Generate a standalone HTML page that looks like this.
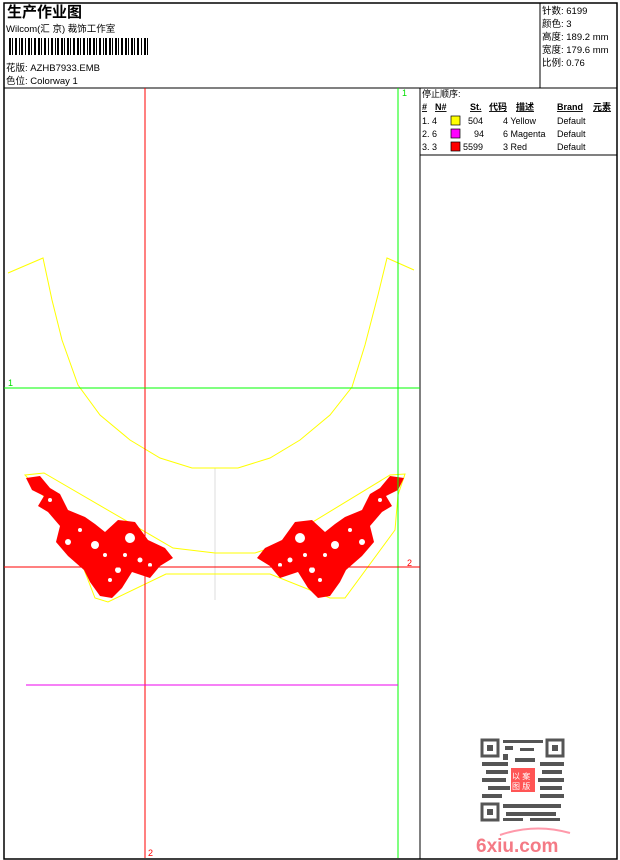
<!DOCTYPE html>
<html><head><meta charset="utf-8"><style>
html,body{margin:0;padding:0;background:#fff;}
svg{display:block;}
text{font-family:"Liberation Sans","Noto Sans CJK SC",sans-serif;}
</style></head><body>
<svg width="620" height="860" viewBox="0 0 620 860" xmlns="http://www.w3.org/2000/svg">
<defs>
<g id="motif">
<path d="M26,478 L40,476 L50,488 L60,494 L68,510 L85,517 L95,524 L105,532 L118,520 L135,522 L148,540 L165,548 L173,558 L160,566 L150,578 L132,572 L122,588 L112,598 L100,596 L90,582 L84,570 L68,556 L56,542 L60,526 L48,512 L38,506 L44,496 L32,490 Z" fill="#f00"/>
<g fill="#fff">
<circle cx="130" cy="538" r="5"/><circle cx="95" cy="545" r="4"/><circle cx="68" cy="542" r="3"/><circle cx="118" cy="570" r="3"/><circle cx="140" cy="560" r="2.5"/><circle cx="105" cy="555" r="2"/><circle cx="125" cy="555" r="2"/><circle cx="50" cy="500" r="2"/><circle cx="80" cy="530" r="2"/><circle cx="110" cy="580" r="2"/><circle cx="150" cy="565" r="2"/>
</g>
</g>
</defs>
<rect x="4" y="3" width="613" height="856" fill="#fff" stroke="#000" stroke-width="1.5"/>
<line x1="4" y1="88" x2="617" y2="88" stroke="#000"/>
<line x1="540" y1="3" x2="540" y2="88" stroke="#000"/>
<line x1="420" y1="88" x2="420" y2="859" stroke="#000"/>
<line x1="420" y1="155" x2="617" y2="155" stroke="#000"/>
<text x="7" y="17" font-size="15" font-weight="bold">生产作业图</text>
<text x="6" y="32" font-size="9.5">Wilcom(汇 京) 裁饰工作室</text>
<g fill="#000">
<rect x="9" y="38" width="2" height="17"/><rect x="12" y="38" width="1" height="17"/><rect x="15" y="38" width="2" height="17"/><rect x="19" y="38" width="1" height="17"/><rect x="21" y="38" width="2" height="17"/><rect x="25" y="38" width="1" height="17"/><rect x="28" y="38" width="2" height="17"/><rect x="31" y="38" width="1" height="17"/><rect x="34" y="38" width="2" height="17"/><rect x="38" y="38" width="2" height="17"/><rect x="41" y="38" width="1" height="17"/><rect x="44" y="38" width="2" height="17"/><rect x="48" y="38" width="1" height="17"/><rect x="51" y="38" width="2" height="17"/><rect x="55" y="38" width="1" height="17"/><rect x="57" y="38" width="2" height="17"/><rect x="61" y="38" width="2" height="17"/><rect x="64" y="38" width="1" height="17"/><rect x="67" y="38" width="2" height="17"/><rect x="70" y="38" width="1" height="17"/><rect x="73" y="38" width="2" height="17"/><rect x="77" y="38" width="2" height="17"/><rect x="80" y="38" width="1" height="17"/><rect x="83" y="38" width="2" height="17"/><rect x="87" y="38" width="1" height="17"/><rect x="89" y="38" width="2" height="17"/><rect x="93" y="38" width="2" height="17"/><rect x="96" y="38" width="1" height="17"/><rect x="99" y="38" width="2" height="17"/><rect x="103" y="38" width="1" height="17"/><rect x="105" y="38" width="2" height="17"/><rect x="109" y="38" width="2" height="17"/><rect x="112" y="38" width="1" height="17"/><rect x="115" y="38" width="2" height="17"/><rect x="118" y="38" width="1" height="17"/><rect x="121" y="38" width="2" height="17"/><rect x="125" y="38" width="2" height="17"/><rect x="128" y="38" width="1" height="17"/><rect x="131" y="38" width="2" height="17"/><rect x="134" y="38" width="1" height="17"/><rect x="137" y="38" width="2" height="17"/><rect x="141" y="38" width="1" height="17"/><rect x="144" y="38" width="2" height="17"/><rect x="147" y="38" width="1" height="17"/>
</g>
<text x="6" y="71" font-size="9.5">花版: AZHB7933.EMB</text>
<text x="6" y="84" font-size="9.5">色位: Colorway 1</text>
<g font-size="9.5">
<text x="542" y="14">针数: 6199</text>
<text x="542" y="27">颜色: 3</text>
<text x="542" y="40">高度: 189.2 mm</text>
<text x="542" y="53">宽度: 179.6 mm</text>
<text x="542" y="66">比例: 0.76</text>
</g>
<g font-size="9">
<text x="422" y="97">停止顺序:</text>
<g font-weight="bold" text-decoration="underline">
<text x="422" y="110">#</text><text x="435" y="110">N#</text><text x="470" y="110">St.</text><text x="489" y="110">代码</text><text x="516" y="110">描述</text><text x="557" y="110">Brand</text><text x="593" y="110">元素</text>
</g>
<text x="422" y="124">1. 4</text><rect x="451" y="116" width="9" height="9" fill="#ff0" stroke="#000" stroke-width=".7"/><text x="468" y="124">504</text><text x="503" y="124">4 Yellow</text><text x="557" y="124">Default</text>
<text x="422" y="137">2. 6</text><rect x="451" y="129" width="9" height="9" fill="#f0f" stroke="#000" stroke-width=".7"/><text x="474" y="137">94</text><text x="503" y="137">6 Magenta</text><text x="557" y="137">Default</text>
<text x="422" y="150">3. 3</text><rect x="451" y="142" width="9" height="9" fill="#f00" stroke="#000" stroke-width=".7"/><text x="463" y="150">5599</text><text x="503" y="150">3 Red</text><text x="557" y="150">Default</text>
</g>
<line x1="215" y1="468" x2="215" y2="600" stroke="#ddd"/>
<path d="M8,273 L43,258 L52,300 L62,340 L78,385 L100,415 L130,440 L160,458 L192,468 L238,468 L270,458 L300,440 L330,415 L352,387 L365,345 L378,295 L387,258 L414,270" fill="none" stroke="#ff0" stroke-width="1"/>
<path d="M25,475 L44,473 L173,548 L215,553 L255,553 L270,548 L390,475 L405,474 L398,495 L395,530 L345,598 L330,598 L270,574 L166,574 L108,602 L95,598 L65,520 Z" fill="none" stroke="#ff0"/>
<use href="#motif"/>
<use href="#motif" transform="translate(430,0) scale(-1,1)"/>
<line x1="145" y1="88" x2="145" y2="858" stroke="#f00"/>
<line x1="398" y1="88" x2="398" y2="858" stroke="#0f0"/>
<line x1="4" y1="388" x2="420" y2="388" stroke="#0f0"/>
<line x1="4" y1="567" x2="420" y2="567" stroke="#f00"/>
<line x1="26" y1="685" x2="398" y2="685" stroke="#e0e"/>
<g font-size="9">
<text x="8" y="386" fill="#0d0">1</text>
<text x="402" y="96" fill="#0d0">1</text>
<text x="407" y="566" fill="#f00">2</text>
<text x="148" y="856" fill="#f00">2</text>
</g>
<g fill="#555">
<rect x="482" y="740" width="16" height="16" fill="none" stroke="#555" stroke-width="3"/><rect x="487" y="745" width="6" height="6"/>
<rect x="547" y="740" width="16" height="16" fill="none" stroke="#555" stroke-width="3"/><rect x="552" y="745" width="6" height="6"/>
<rect x="482" y="804" width="16" height="16" fill="none" stroke="#555" stroke-width="3"/><rect x="487" y="809" width="6" height="6"/>
<rect x="503" y="740" width="40" height="3"/><rect x="505" y="746" width="8" height="4"/><rect x="520" y="748" width="14" height="3"/><rect x="503" y="754" width="5" height="6"/>
<rect x="482" y="762" width="26" height="4"/><rect x="486" y="770" width="22" height="4"/><rect x="482" y="778" width="24" height="4"/><rect x="488" y="786" width="22" height="4"/><rect x="482" y="794" width="20" height="4"/>
<rect x="540" y="762" width="24" height="4"/><rect x="542" y="770" width="20" height="4"/><rect x="538" y="778" width="26" height="4"/><rect x="540" y="786" width="22" height="4"/><rect x="540" y="794" width="24" height="4"/>
<rect x="503" y="804" width="58" height="4"/><rect x="506" y="812" width="50" height="4"/><rect x="503" y="818" width="20" height="3"/><rect x="530" y="818" width="30" height="3"/>
<rect x="515" y="758" width="20" height="4"/>
</g>
<rect x="511" y="768" width="24" height="24" fill="#f55"/>
<text x="512" y="779" font-size="8" fill="#fff">以 案</text>
<text x="512" y="789" font-size="8" fill="#fff">图 版</text>
<path d="M500,835 Q535,823 570,833" fill="none" stroke="#f9a" stroke-width="2"/>
<text x="476" y="852" font-size="19" font-weight="bold" fill="#f47a85">6xiu.com</text>
</svg>
</body></html>
